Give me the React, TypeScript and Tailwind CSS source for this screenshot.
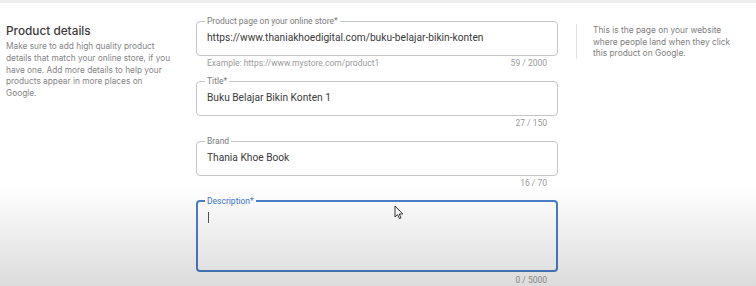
import React from "react";

const fieldFont = { fontFamily: "Roboto, 'Liberation Sans', sans-serif" };

function Field({
  label,
  value,
  helper,
  counter,
}: {
  label: string;
  value: string;
  helper?: string;
  counter: string;
}) {
  return (
    <div className="h-[60px]">
      <fieldset className="h-[40px] border border-[#c6c6c6] rounded-[4px] px-[8px]">
        <legend className="px-[2px] text-[8.5px] leading-[10px] text-[#7b7b7b]">{label}</legend>
        <div className="pl-[2px] mt-[5px] text-[10.2px] leading-[14px] text-[#3a3a3a] whitespace-nowrap">
          {value}
        </div>
      </fieldset>
      <div className="flex justify-between mt-[2px] pl-[11px] pr-[11px] text-[8.5px] leading-[10px] text-[#9a9a9a]">
        <span>{helper ?? ""}</span>
        <span>{counter}</span>
      </div>
    </div>
  );
}

export default function App() {
  return (
    <div className="relative w-[756px] h-[286px] overflow-hidden bg-white">
      <div className="h-[3px] bg-[#eeeeee]" />
      <div className="flex">
        <div className="w-[196px] pl-[6px] pt-[20px]" style={{ fontFamily: "Inter, 'Liberation Sans', sans-serif" }}>
          <div className="text-[11.8px] leading-[16px] font-medium text-[#3b3b3b]">Product details</div>
          <p className="mt-[2px] w-[171px] text-[8.3px] leading-[11.8px] text-[#858585]">
            Make sure to add high quality product details that match your online store, if you have one. Add more
            details to help your products appear in more places on
            <br />
            Google.
          </p>
        </div>
        <div className="w-[362px] pt-[13px]" style={fieldFont}>
          <Field
            label="Product page on your online store*"
            value="https://www.thaniakhoedigital.com/buku-belajar-bikin-konten"
            helper="Example: https://www.mystore.com/product1"
            counter="59 / 2000"
          />
          <Field label="Title*" value="Buku Belajar Bikin Konten 1" counter="27 / 150" />
          <Field label="Brand" value="Thania Khoe Book" counter="16 / 70" />
          <div>
            <fieldset className="h-[76px] border-2 border-[#4a7fc9] rounded-[4px] px-[7px]">
              <legend className="px-[2px] text-[8.5px] leading-[10px] text-[#3f78c8]">Description*</legend>
              <div className="ml-[3px] mt-[6px] w-[1px] h-[11px] bg-[#555555]" />
            </fieldset>
            <div className="flex justify-end mt-[3px] pr-[11px] text-[8.5px] leading-[10px] text-[#9a9a9a]">
              <span>0 / 5000</span>
            </div>
          </div>
        </div>
        <div className="ml-[18px] mt-[21px] flex h-[35px]">
          <div className="w-[1px] bg-[#e2e2e2]" />
          <p
            className="ml-[16px] mt-[1px] w-[150px] text-[8.4px] leading-[11.5px] text-[#808080]"
            style={{ fontFamily: "Inter, 'Liberation Sans', sans-serif" }}
          >
            This is the page on your website where people land when they click this product on Google.
          </p>
        </div>
      </div>
      <svg
        className="absolute left-[394px] top-[205px]"
        width="10"
        height="15"
        viewBox="0 0 10 15"
      >
        <path d="M1 1 L1 12 L3.6 9.6 L5.4 13.6 L7 12.9 L5.3 9 L8.8 9 Z" fill="white" stroke="#222" strokeWidth="0.9" strokeLinejoin="round" />
      </svg>
      <div className="pointer-events-none absolute left-0 right-0 bottom-0 h-[100px] bg-linear-to-b from-transparent to-black/14" />
    </div>
  );
}
